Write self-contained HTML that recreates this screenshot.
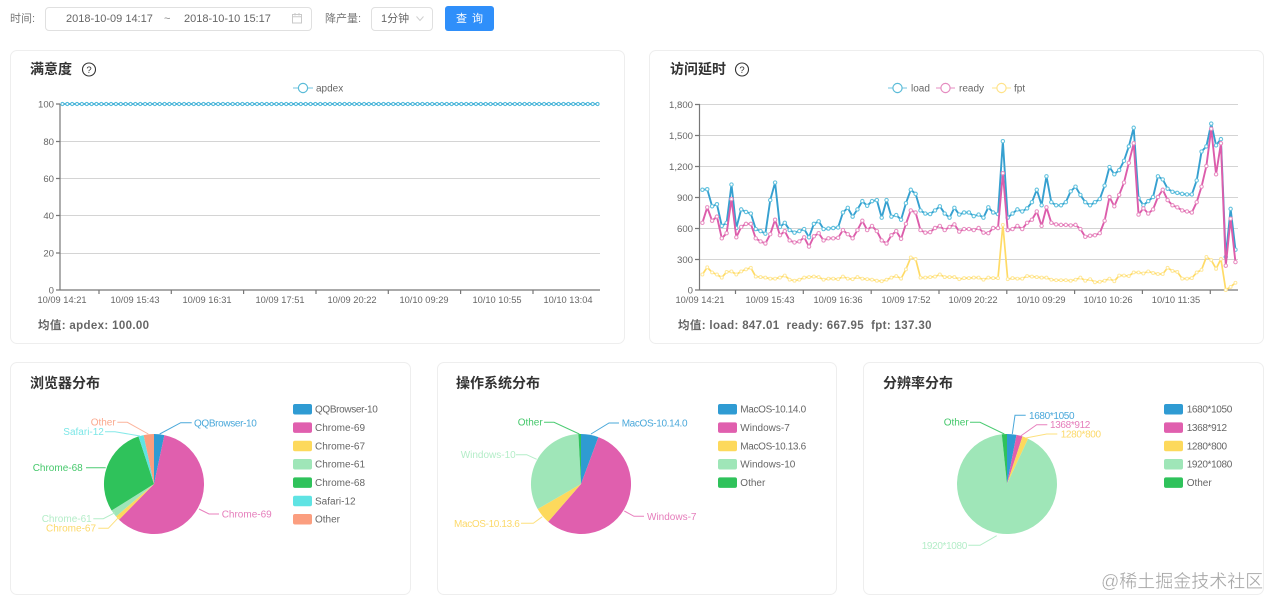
<!DOCTYPE html>
<html lang="zh">
<head>
<meta charset="utf-8">
<title>Dashboard</title>
<style>
html,body{margin:0;padding:0;background:#fff;}
body{width:1280px;height:609px;position:relative;overflow:hidden;font-family:"Liberation Sans","Noto Sans CJK SC",sans-serif;color:#666;filter:blur(.35px);}
.abs{position:absolute;white-space:nowrap;}
.card{position:absolute;box-sizing:border-box;background:#fff;border:1px solid #eeeeee;border-radius:7px;}
.box{position:absolute;box-sizing:border-box;border:1px solid #e0e0e0;border-radius:4px;background:#fff;}
.lbl{font-size:11px;line-height:14px;color:#777;}
.title{font-size:14px;line-height:20px;font-weight:bold;color:#333;}
.foot{font-size:11.5px;line-height:16px;font-weight:bold;color:#666;letter-spacing:.35px;}
svg.ov{position:absolute;left:0;top:0;}
svg text{font-family:"Liberation Sans","Noto Sans CJK SC",sans-serif;}
.ax{font-size:9.3px;fill:#666;}
.yl{font-size:9.6px;fill:#666;text-anchor:end;}
.lg{font-size:10px;fill:#666;}
.pl{font-size:10px;}
.nr{letter-spacing:-.35px;}
.grid{stroke:#d4d4d4;stroke-width:1;}
.axis{stroke:#777;stroke-width:1.2;fill:none;}
.lead{fill:none;stroke-width:1;}
</style>
</head>
<body>
<div class="abs lbl" style="left:10px;top:12px;">时间:</div>
<div class="box" style="left:45px;top:7px;width:267px;height:24px;"></div>
<div class="abs lbl" style="left:66px;top:12px;color:#666;">2018-10-09 14:17</div>
<div class="abs lbl" style="left:164px;top:12px;color:#888;">~</div>
<div class="abs lbl" style="left:184px;top:12px;color:#666;">2018-10-10 15:17</div>
<div class="abs lbl" style="left:325px;top:12px;">降产量:</div>
<div class="box" style="left:371px;top:7px;width:62px;height:24px;"></div>
<div class="abs lbl" style="left:381px;top:12px;color:#666;">1分钟</div>
<div class="abs" style="left:445px;top:6px;width:49px;height:25px;background:#2f8ffa;border-radius:3px;color:#fff;font-size:11px;line-height:27px;text-align:center;word-spacing:2px;">查 询</div>

<div class="card" style="left:10px;top:50px;width:615px;height:294px;"></div>
<div class="card" style="left:649px;top:50px;width:615px;height:294px;"></div>
<div class="card" style="left:10px;top:362px;width:401px;height:233px;"></div>
<div class="card" style="left:437px;top:362px;width:400px;height:233px;"></div>
<div class="card" style="left:863px;top:362px;width:401px;height:233px;"></div>

<div class="abs title" style="left:30px;top:59px;">满意度</div>
<div class="abs title" style="left:670px;top:59px;">访问延时</div>
<div class="abs title" style="left:30px;top:373px;">浏览器分布</div>
<div class="abs title" style="left:456px;top:373px;">操作系统分布</div>
<div class="abs title" style="left:883px;top:373px;">分辨率分布</div>

<div class="abs foot" style="left:38px;top:318px;">均值:&nbsp;apdex: 100.00</div>
<div class="abs foot" style="left:678px;top:318px;">均值:&nbsp;load: 847.01 &nbsp;ready: 667.95 &nbsp;fpt: 137.30</div>

<svg class="ov" width="1280" height="609" viewBox="0 0 1280 609" xmlns="http://www.w3.org/2000/svg">
<defs>
<marker id="mb" markerUnits="userSpaceOnUse" markerWidth="10" markerHeight="100" refX="0" refY="0" overflow="visible"><ellipse rx=".46" ry="21.5" fill="#62c2de"/><ellipse rx=".24" ry="11.3" fill="#fff"/></marker>
<marker id="mr" markerUnits="userSpaceOnUse" markerWidth="10" markerHeight="100" refX="0" refY="0" overflow="visible"><ellipse rx=".46" ry="21.5" fill="#e88fc2"/><ellipse rx=".24" ry="11.3" fill="#fff"/></marker>
<marker id="my" markerUnits="userSpaceOnUse" markerWidth="10" markerHeight="100" refX="0" refY="0" overflow="visible"><ellipse rx=".4" ry="18.8" fill="#ffe89a"/><ellipse rx=".2" ry="9.4" fill="#fff"/></marker>
</defs>

<!-- toolbar icons -->
<g fill="none" stroke="#c9c9c9" stroke-width="1">
<rect x="292.5" y="14.5" width="9" height="8.5"/><path d="M292.5 16.8h9M295 13v2.5M299 13v2.5"/>
<path d="M416.5 16.5l3.5 4 3.5-4" stroke="#cfcfcf"/>
</g>

<!-- help icons -->
<g fill="none" stroke="#333" stroke-width="1.1"><circle cx="89" cy="69.5" r="6.5"/><circle cx="742" cy="69.5" r="6.5"/></g>
<text x="89" y="73" font-size="9.5" fill="#333" text-anchor="middle">?</text>
<text x="742" y="73" font-size="9.5" fill="#333" text-anchor="middle">?</text>

<!-- Card 1 chart -->
<g class="grid">
<path d="M60 141.5H600M60 178.5H600M60 215.5H600M60 253.5H600" fill="none"/>
</g>
<path class="axis" d="M60 104V290H600M56 104H60M56 141.5H60M56 178.5H60M56 215.5H60M56 253H60M56 290H60M99 290v4M171.3 290v4M243.6 290v4M316 290v4M388.3 290v4M460.6 290v4M533 290v4"/>
<g class="yl">
<text x="54" y="107.5">100</text><text x="54" y="145">80</text><text x="54" y="182">60</text><text x="54" y="219">40</text><text x="54" y="256.5">20</text><text x="54" y="293.5">0</text>
</g>
<g class="ax" text-anchor="middle">
<text x="62" y="303">10/09 14:21</text><text x="135" y="303">10/09 15:43</text><text x="207" y="303">10/09 16:31</text><text x="280" y="303">10/09 17:51</text><text x="352" y="303">10/09 20:22</text><text x="424" y="303">10/10 09:29</text><text x="497" y="303">10/10 10:55</text><text x="568" y="303">10/10 13:04</text>
</g>
<line x1="62" y1="104" x2="598" y2="104" stroke="#36a2d2" stroke-width="1.8"/>
<line x1="62.4" y1="104" x2="598" y2="104" stroke="#55bcdc" stroke-width="4.2" stroke-linecap="round" stroke-dasharray="0 4.865"/>
<line x1="62.4" y1="104" x2="598" y2="104" stroke="#fff" stroke-width="2" stroke-linecap="round" stroke-dasharray="0 4.865"/>
<!-- legend apdex -->
<path d="M293 88H313" stroke="#8fd0e6" stroke-width="1.2"/>
<circle cx="303" cy="88" r="4.6" fill="#fff" stroke="#5bbcd8" stroke-width="1.2"/>
<text class="lg" x="316" y="91.5">apdex</text>

<!-- Card 2 chart -->
<path class="grid" fill="none" d="M700 104.5H1238M700 135.5H1238M700 166.5H1238M700 197.5H1238M700 228.5H1238M700 259.5H1238"/>
<path class="axis" d="M699.5 104V290H1238M695 104.5H700M695 135.5H700M695 166.5H700M695 197.5H700M695 228.5H700M695 259.5H700M695 290H700M735.5 290v4M803.3 290v4M871.2 290v4M939 290v4M1006.8 290v4M1074.6 290v4M1142.4 290v4M1210.3 290v4"/>
<g class="yl">
<text x="693" y="108">1,800</text><text x="693" y="139">1,500</text><text x="693" y="170">1,200</text><text x="693" y="201">900</text><text x="693" y="232">600</text><text x="693" y="263">300</text><text x="693" y="293.5">0</text>
</g>
<g class="ax" text-anchor="middle">
<text x="700" y="303">10/09 14:21</text><text x="770" y="303">10/09 15:43</text><text x="838" y="303">10/09 16:36</text><text x="906" y="303">10/09 17:52</text><text x="973" y="303">10/09 20:22</text><text x="1041" y="303">10/10 09:29</text><text x="1108" y="303">10/10 10:26</text><text x="1176" y="303">10/10 11:35</text>
</g>
<g transform="matrix(4.846 0 0 -.10333 702.4 290)" fill="none" stroke-linejoin="round">
<polyline vector-effect="non-scaling-stroke" stroke="#36a0d0" stroke-width="1.9" marker-start="url(#mb)" marker-mid="url(#mb)" marker-end="url(#mb)" points="0,970 1,975 2,810 3,830 4,620 5,650 6,1020 7,600 8,780 9,755 10,740 11,590 12,570 13,545 14,870 15,1040 16,610 17,650 18,580 19,555 20,570 21,590 22,510 23,640 24,665 25,590 26,595 27,600 28,605 29,750 30,795 31,710 32,780 33,860 34,815 35,860 36,870 37,700 38,870 39,710 40,725 41,680 42,840 43,970 44,930 45,770 46,740 47,735 48,770 49,810 50,740 51,700 52,795 53,730 54,750 55,750 56,715 57,730 58,700 59,800 60,750 61,735 62,1440 63,700 64,740 65,780 66,760 67,790 68,850 69,970 70,820 71,1100 72,850 73,820 74,820 75,850 76,955 77,1000 78,920 79,850 80,820 81,850 82,880 83,1010 84,1190 85,1120 86,1160 87,1250 88,1390 89,1570 90,890 91,820 92,860 93,900 94,1100 95,1070 96,980 97,950 98,940 99,930 100,925 101,925 102,1060 103,1340 104,1390 105,1610 106,1400 107,1460 108,320 109,785 110,390"/>
<polyline vector-effect="non-scaling-stroke" stroke="#dc5dab" stroke-width="1.9" marker-start="url(#mr)" marker-mid="url(#mr)" marker-end="url(#mr)" points="0,650 1,800 2,670 3,710 4,500 5,550 6,880 7,510 8,610 9,640 10,640 11,500 12,470 13,450 14,540 15,680 16,530 17,570 18,480 19,460 20,470 21,510 22,420 23,520 24,550 25,480 26,500 27,500 28,505 29,580 30,540 31,500 32,580 33,670 34,580 35,620 36,570 37,480 38,450 39,530 40,570 41,495 42,640 43,770 44,750 45,580 46,555 47,560 48,600 49,620 50,580 51,610 52,635 53,565 54,590 55,590 56,580 57,600 58,555 59,550 60,600 61,600 62,1130 63,580 64,590 65,620 66,590 67,650 68,680 69,760 70,620 71,800 72,650 73,635 74,630 75,630 76,625 77,630 78,590 79,515 80,525 81,530 82,550 83,670 84,900 85,810 86,920 87,1040 88,1230 89,1420 90,730 91,790 92,740 93,780 94,900 95,970 96,870 97,820 98,800 99,770 100,760 101,750 102,850 103,1000 104,1200 105,1560 106,1120 107,1420 108,235 109,690 110,270"/>
<polyline vector-effect="non-scaling-stroke" stroke="#ffdb66" stroke-width="1.7" marker-start="url(#my)" marker-mid="url(#my)" marker-end="url(#my)" points="0,150 1,220 2,170 3,150 4,120 5,175 6,180 7,150 8,180 9,200 10,215 11,130 12,125 13,120 14,110 15,110 16,120 17,140 18,100 19,90 20,100 21,120 22,125 23,130 24,125 25,100 26,110 27,110 28,105 29,130 30,110 31,105 32,125 33,110 34,105 35,100 36,90 37,85 38,100 39,120 40,135 41,110 42,200 43,315 44,300 45,120 46,120 47,125 48,130 49,150 50,125 51,125 52,125 53,105 54,115 55,115 56,120 57,120 58,100 59,120 60,115 61,115 62,630 63,105 64,115 65,110 66,110 67,135 68,130 69,125 70,120 71,120 72,100 73,95 74,95 75,95 76,90 77,100 78,120 79,90 80,105 81,75 82,80 83,90 84,110 85,85 86,140 87,140 88,135 89,170 90,170 91,160 92,180 93,165 94,155 95,155 96,215 97,185 98,175 99,110 100,110 101,115 102,170 103,195 104,320 105,290 106,205 107,300 108,0 109,30 110,70"/>
</g>
<!-- legend latency -->
<path d="M888 88H907" stroke="#8fd0e6" stroke-width="1.2"/><circle cx="897.5" cy="88" r="4.6" fill="#fff" stroke="#5bbcd8" stroke-width="1.2"/>
<text class="lg" x="911" y="91.5">load</text>
<path d="M936 88H955" stroke="#eaa5cd" stroke-width="1.2"/><circle cx="945.5" cy="88" r="4.6" fill="#fff" stroke="#e58cc0" stroke-width="1.2"/>
<text class="lg" x="959" y="91.5">ready</text>
<path d="M992 88H1011" stroke="#ffe9a0" stroke-width="1.2"/><circle cx="1001.5" cy="88" r="4.6" fill="#fff" stroke="#ffe38a" stroke-width="1.2"/>
<text class="lg" x="1014" y="91.5">fpt</text>

<!-- Pie 1 -->
<g>
<path d="M154 484L154 434A50 50 0 0 1 164.4 435.1Z" fill="#2f9bd3"/>
<path d="M154 484L164.4 435.1A50 50 0 1 1 119 519.7Z" fill="#e05fae"/>
<path d="M154 484L119 519.7A50 50 0 0 1 116 516.5Z" fill="#fdd95c"/>
<path d="M154 484L116 516.5A50 50 0 0 1 111.6 510.5Z" fill="#9fe6b8"/>
<path d="M154 484L111.6 510.5A50 50 0 0 1 138.5 436.4Z" fill="#2fc25b"/>
<path d="M154 484L138.5 436.4A50 50 0 0 1 143.6 435.1Z" fill="#5fe3e3"/>
<path d="M154 484L143.6 435.1A50 50 0 0 1 154 434Z" fill="#fb9e7f"/>
</g>
<g class="lead">
<path d="M159.7 434L180.7 422.7H191.7" stroke="#4aa8da"/>
<path d="M199 509L209 514H219" stroke="#e880be"/>
<path d="M98.3 528.3H108.3L119.3 516.7" stroke="#fde07e"/>
<path d="M93.3 518.7H103.3L115 512.7" stroke="#b4edc8"/>
<path d="M86 467.7H105.7" stroke="#4bcb72"/>
<path d="M105 431.7H115L140 436" stroke="#86e9e9"/>
<path d="M117.3 422.3H127.3L148.3 434" stroke="#fcb49c"/>
</g>
<g class="pl">
<text class="nr" x="194" y="426.5" fill="#4aa8da">QQBrowser-10</text>
<text x="221.7" y="517.5" fill="#e57dbb">Chrome-69</text>
<text x="46" y="531.5" fill="#fcd96a">Chrome-67</text>
<text x="41.7" y="522" fill="#b4edc8">Chrome-61</text>
<text x="32.7" y="471" fill="#45c86b">Chrome-68</text>
<text x="63.3" y="435" fill="#7de7e7">Safari-12</text>
<text x="90.7" y="425.7" fill="#fba98e">Other</text>
</g>
<g>
<rect x="293" y="404" width="19" height="10.5" rx="2" fill="#2f9bd3"/>
<rect x="293" y="422.4" width="19" height="10.5" rx="2" fill="#e05fae"/>
<rect x="293" y="440.7" width="19" height="10.5" rx="2" fill="#fdd95c"/>
<rect x="293" y="459" width="19" height="10.5" rx="2" fill="#9fe6b8"/>
<rect x="293" y="477.4" width="19" height="10.5" rx="2" fill="#2fc25b"/>
<rect x="293" y="495.7" width="19" height="10.5" rx="2" fill="#5fe3e3"/>
<rect x="293" y="514" width="19" height="10.5" rx="2" fill="#fb9e7f"/>
</g>
<g class="lg">
<text class="nr" x="315" y="412.7">QQBrowser-10</text><text x="315" y="431">Chrome-69</text><text x="315" y="449.4">Chrome-67</text><text x="315" y="467.7">Chrome-61</text><text x="315" y="486">Chrome-68</text><text x="315" y="504.4">Safari-12</text><text x="315" y="522.7">Other</text>
</g>

<!-- Pie 2 -->
<g>
<path d="M581 484L581 434A50 50 0 0 1 598.4 437.1Z" fill="#2f9bd3"/>
<path d="M581 484L598.4 437.1A50 50 0 1 1 548.2 521.7Z" fill="#e05fae"/>
<path d="M581 484L548.2 521.7A50 50 0 0 1 537.7 509Z" fill="#fdd95c"/>
<path d="M581 484L537.7 509A50 50 0 0 1 578.4 434Z" fill="#9fe6b8"/>
<path d="M581 484L578.4 434A50 50 0 0 1 581 434Z" fill="#2fc25b"/>
</g>
<g class="lead">
<path d="M591 434L609 423H619" stroke="#4aa8da"/>
<path d="M624.3 511L634 516.3H644" stroke="#e880be"/>
<path d="M521 523.3H533.3L542.3 516.7" stroke="#fde07e"/>
<path d="M516 454.7H526.7L536.7 459.3" stroke="#b4edc8"/>
<path d="M544 422.3H554L579.3 434" stroke="#4bcb72"/>
</g>
<g class="pl">
<text class="nr" x="621.7" y="426.5" fill="#4aa8da">MacOS-10.14.0</text>
<text x="647" y="519.8" fill="#e57dbb">Windows-7</text>
<text class="nr" x="454" y="526.8" fill="#fcd96a">MacOS-10.13.6</text>
<text x="460.7" y="458.2" fill="#b4edc8">Windows-10</text>
<text x="517.7" y="425.7" fill="#45c86b">Other</text>
</g>
<g>
<rect x="718" y="404" width="19" height="10.5" rx="2" fill="#2f9bd3"/>
<rect x="718" y="422.4" width="19" height="10.5" rx="2" fill="#e05fae"/>
<rect x="718" y="440.7" width="19" height="10.5" rx="2" fill="#fdd95c"/>
<rect x="718" y="459" width="19" height="10.5" rx="2" fill="#9fe6b8"/>
<rect x="718" y="477.4" width="19" height="10.5" rx="2" fill="#2fc25b"/>
</g>
<g class="lg">
<text class="nr" x="740.3" y="412.7">MacOS-10.14.0</text><text x="740.3" y="431">Windows-7</text><text class="nr" x="740.3" y="449.4">MacOS-10.13.6</text><text x="740.3" y="467.7">Windows-10</text><text x="740.3" y="486">Other</text>
</g>

<!-- Pie 3 -->
<g>
<path d="M1007 484L1007 434A50 50 0 0 1 1016.5 434.9Z" fill="#2f9bd3"/>
<path d="M1007 484L1016.5 434.9A50 50 0 0 1 1022.5 436.4Z" fill="#e05fae"/>
<path d="M1007 484L1022.5 436.4A50 50 0 0 1 1028.1 438.7Z" fill="#fdd95c"/>
<path d="M1007 484L1028.1 438.7A50 50 0 1 1 1001.8 434.3Z" fill="#9fe6b8"/>
<path d="M1007 484L1001.8 434.3A50 50 0 0 1 1007 434Z" fill="#2fc25b"/>
</g>
<g class="lead">
<path d="M1012.3 434L1015 415.3H1025.7" stroke="#4aa8da"/>
<path d="M1020.7 436L1036.7 424.7H1047.3" stroke="#e880be"/>
<path d="M1025.7 438L1046.7 434H1057.3" stroke="#fde07e"/>
<path d="M968.3 545.3H980L996.7 535.7" stroke="#b4edc8"/>
<path d="M970 422.3H980L1004.3 434" stroke="#4bcb72"/>
</g>
<g class="pl">
<text class="nr" x="1029" y="418.8" fill="#4aa8da">1680*1050</text>
<text class="nr" x="1050" y="428.2" fill="#e57dbb">1368*912</text>
<text class="nr" x="1060.7" y="437.5" fill="#fcd96a">1280*800</text>
<text class="nr" x="921.7" y="548.8" fill="#b4edc8">1920*1080</text>
<text x="943.7" y="425.7" fill="#45c86b">Other</text>
</g>
<g>
<rect x="1164" y="404" width="19" height="10.5" rx="2" fill="#2f9bd3"/>
<rect x="1164" y="422.4" width="19" height="10.5" rx="2" fill="#e05fae"/>
<rect x="1164" y="440.7" width="19" height="10.5" rx="2" fill="#fdd95c"/>
<rect x="1164" y="459" width="19" height="10.5" rx="2" fill="#9fe6b8"/>
<rect x="1164" y="477.4" width="19" height="10.5" rx="2" fill="#2fc25b"/>
</g>
<g class="lg">
<text class="nr" x="1186.7" y="412.7">1680*1050</text><text class="nr" x="1186.7" y="431">1368*912</text><text class="nr" x="1186.7" y="449.4">1280*800</text><text class="nr" x="1186.7" y="467.7">1920*1080</text><text x="1186.7" y="486">Other</text>
</g>

<!-- watermark -->
<text x="1101" y="587.5" font-size="18" fill="#8f8f8f" fill-opacity=".8" stroke="#fff" stroke-width=".3" style="font-family:'Liberation Sans','Noto Sans CJK SC',sans-serif;">@稀土掘金技术社区</text>
</svg>
</body>
</html>
